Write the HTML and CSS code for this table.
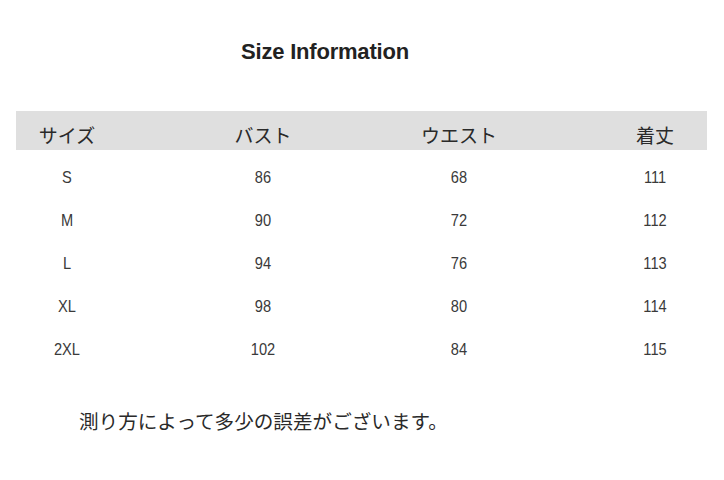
FILE: index.html
```html
<!DOCTYPE html>
<html lang="ja">
<head>
<meta charset="utf-8">
<title>Size Information</title>
<link rel="stylesheet" href="styles.css">
</head>
<body>
<div class="page">
  <h1 class="title">Size Information</h1>
  <div class="table">
    <div class="head">
      <span class="cell">サイズ</span>
      <span class="cell">バスト</span>
      <span class="cell">ウエスト</span>
      <span class="cell">着丈</span>
    </div>
    <div class="body">
      <div class="row"><span class="cell">S</span><span class="cell">86</span><span class="cell">68</span><span class="cell">111</span></div>
      <div class="row"><span class="cell">M</span><span class="cell">90</span><span class="cell">72</span><span class="cell">112</span></div>
      <div class="row"><span class="cell">L</span><span class="cell">94</span><span class="cell">76</span><span class="cell">113</span></div>
      <div class="row"><span class="cell">XL</span><span class="cell">98</span><span class="cell">80</span><span class="cell">114</span></div>
      <div class="row"><span class="cell">2XL</span><span class="cell">102</span><span class="cell">84</span><span class="cell">115</span></div>
    </div>
  </div>
  <p class="note">測り方によって多少の誤差がございます。</p>
</div>
</body>
</html>
```
FILE: styles.css
```css
html, body {
  margin: 0;
  padding: 0;
  background: #ffffff;
}

.page {
  width: 724px;
  height: 480px;
  padding: 40px 17px 0 16px;
  box-sizing: border-box;
  color: #333333;
}

.title {
  margin: 0 0 47px 225px;
  font-family: "Liberation Sans", Arial, sans-serif;
  font-weight: bold;
  font-size: 22px;
  line-height: 24px;
  color: #222222;
  letter-spacing: -0.2px;
}

.head,
.row {
  display: grid;
  grid-template-columns: repeat(4, 100px);
  column-gap: 96px;
  padding-left: 1px;
}

.cell {
  text-align: center;
  white-space: nowrap;
}

.head {
  background: #dfdfdf;
  height: 39px;
  box-sizing: border-box;
  padding-top: 11px;
  font-family: "Noto Sans CJK JP", sans-serif;
  font-size: 19px;
  line-height: 26px;
  color: #2a2a2a;
}

.body {
  padding-top: 6px;
}

.row {
  height: 43px;
  font-family: "Liberation Sans Narrow", "Liberation Sans", sans-serif;
  font-size: 17px;
  line-height: 43px;
  color: #3a3a3a;
}

.row .cell {
  transform: scaleX(0.86);
}

.note {
  margin: 35px 0 0 63px;
  font-family: "Noto Sans CJK JP", sans-serif;
  font-size: 19.6px;
  line-height: 30px;
  color: #2a2a2a;
}
```
